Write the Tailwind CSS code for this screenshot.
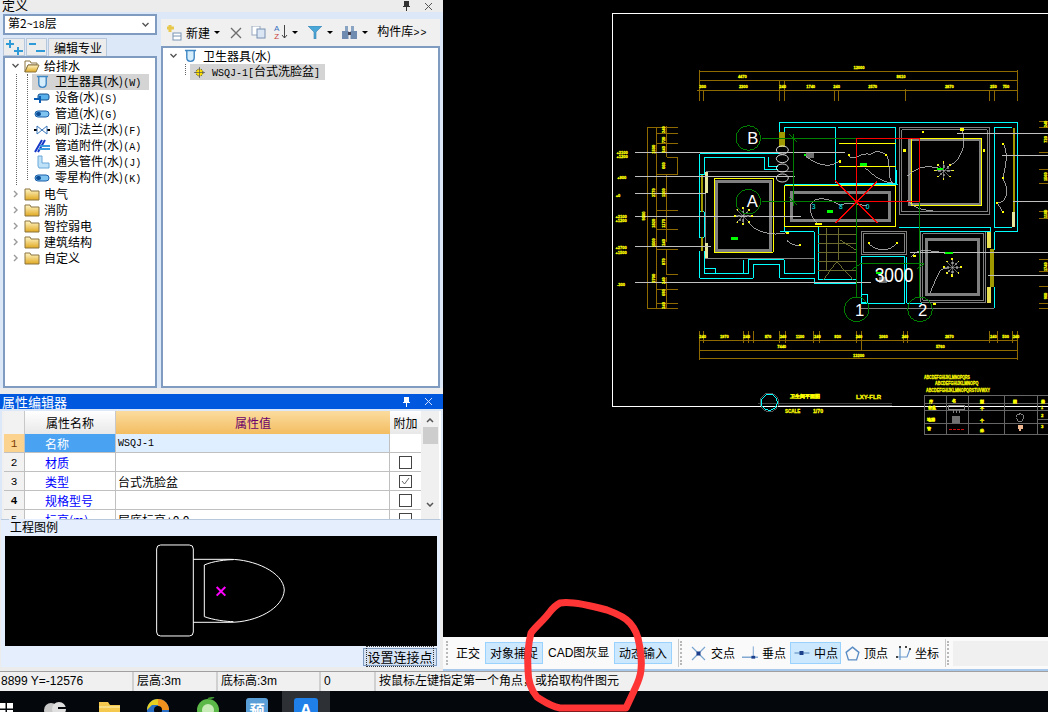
<!DOCTYPE html>
<html lang="zh">
<head>
  <meta charset="UTF-8" />
  <title>构件定义</title>
  <script src="https://cdn.jsdelivr.net/npm/@tailwindcss/browser@4"></script>
</head>
<body class="bg-black">

<!-- shared icons -->
<svg width="0" height="0" class="absolute">
  <defs>
    <linearGradient id="fold" x1="0" y1="0" x2="0" y2="1"><stop offset="0" stop-color="#fff6c8"/><stop offset="1" stop-color="#e0a820"/></linearGradient>
    <symbol id="folder" viewBox="0 0 16 14"><path d="M1 2h5l1 2h8v9H1z" fill="url(#fold)" stroke="#8a7440"/></symbol>
    <symbol id="folderopen" viewBox="0 0 16 14"><path d="M1 2h5l1 2h6v2H4L1 13z" fill="#fff" stroke="#8a7440"/><path d="M1 13l3-7h11l-3 7z" fill="url(#fold)" stroke="#8a7440"/></symbol>
    <symbol id="cup" viewBox="0 0 14 14"><path d="M1 1h12M3 1v8c0 5 8 5 8 0V1" fill="#d6eefb" stroke="#3f86c4" stroke-width="1.5"/></symbol>
    <symbol id="pipe" viewBox="0 0 16 10"><rect x="1" y="2" width="14" height="6" rx="3" fill="#7fc4f0" stroke="#1a5fa8"/><rect x="2" y="3" width="5" height="4" rx="2" fill="#0b4a94"/></symbol>
    <symbol id="chevd" viewBox="0 0 8 6"><path d="M1 1l3 3 3-3" fill="none" stroke="#555" stroke-width="1.4"/></symbol>
    <symbol id="chevr" viewBox="0 0 6 8"><path d="M1 1l3 3-3 3" fill="none" stroke="#999" stroke-width="1.4"/></symbol>
    <symbol id="flower" viewBox="-30 -30 60 60" overflow="visible">
      <g fill="#ffff00">
        <rect x="-4" y="-28" width="5" height="7"/><rect x="-4" y="21" width="5" height="7"/><rect x="-29" y="-3" width="7" height="5"/><rect x="22" y="-3" width="7" height="5"/>
        <rect x="-20" y="-20" width="5" height="5"/><rect x="15" y="-20" width="5" height="5"/><rect x="-20" y="15" width="5" height="5"/><rect x="15" y="15" width="5" height="5"/>
      </g>
      <g fill="#707070">
        <rect x="-4" y="-16" width="7" height="7"/><rect x="-4" y="10" width="7" height="7"/><rect x="-17" y="-3" width="7" height="7"/><rect x="10" y="-3" width="7" height="7"/>
        <rect x="8" y="-12" width="6" height="6"/><rect x="-13" y="8" width="6" height="6"/>
      </g>
      <path d="M-20-20L20 20M20-20L-20 20M0-26V26M-26 0H26" stroke="#c0c0c0" stroke-width="1.5"/>
    </symbol>
  </defs>
</svg>

<div class="w-[1048px] h-[712px] overflow-hidden flex flex-col bg-[#f0f0f0] text-[12px] leading-4 text-black font-['Noto_Sans_CJK_SC',sans-serif] relative">

  <div class="flex h-[671px]">
    <!-- left column -->
    <div class="w-[443px] flex flex-col shrink-0 bg-[#ececec]">

      <!-- 定义 panel title, cut by the top of the shot -->
      <div class="h-[12px] flex items-end justify-between pl-[2px] pr-[10px] overflow-hidden">
        <span class="text-[13px] leading-[13px] relative top-[-1px]">定义</span>
        <div class="flex items-center gap-[13px] h-[12px]">
          <svg width="9" height="10" viewBox="0 0 9 10"><path d="M2 0h5v5h1v1H5v4H4V6H1V5h1z" fill="#333"/></svg>
          <svg width="9" height="9" viewBox="0 0 9 9"><path d="M1 1l7 7M8 1L1 8" stroke="#555"/></svg>
        </div>
      </div>

      <!-- definition panes -->
      <div class="h-[376px] flex gap-[4px] pl-[3px] pr-[3px] bg-[#dce8f8]">
        <div class="w-[154px] flex flex-col shrink-0">
          <div class="mt-[2px] h-[21px] bg-white border-2 border-[#7f9cc0] flex items-center justify-between pl-[3px] pr-[5px]">
            <span>第2<span class="font-['Liberation_Mono'] text-[10px]">~18</span>层</span>
            <svg width="9" height="6"><use href="#chevd"/></svg>
          </div>
          <div class="mt-[3px] h-[18px] flex gap-[1px] items-end">
            <div class="w-[22px] h-[18px] bg-[#ececec] border border-[#b8c8dc] flex items-center justify-center">
              <svg width="17" height="15" viewBox="0 0 17 15"><path d="M4 0v8M0 4h8M12 7v8M8 11h9" stroke="#2f9ad8" stroke-width="2"/></svg>
            </div>
            <div class="w-[21px] h-[18px] bg-[#ececec] border border-[#b8c8dc] flex items-center justify-center">
              <svg width="17" height="13" viewBox="0 0 17 13"><path d="M1 3h7M8 10h9" stroke="#2f9ad8" stroke-width="2"/></svg>
            </div>
            <div class="w-[59px] h-[18px] bg-[#ececec] border border-[#b8c8dc] border-b-0 pl-[5px] leading-[18px]">编辑专业</div>
          </div>
          <div class="relative flex-1 bg-white border-2 border-[#7f9cc0]">
            <div class="absolute left-[11px] top-[16px] h-[111px] border-l border-dotted border-[#666]"></div>
            <div class="absolute left-[22px] top-[16px] h-[106px] border-l border-dotted border-[#666]"></div>
            <div class="h-4 flex items-center pl-[6px] gap-[4px]"><svg width="9" height="6"><use href="#chevd"/></svg><svg width="16" height="14"><use href="#folderopen"/></svg><span>给排水</span></div>
            <div class="h-4 flex items-center ml-[27px] mr-[6px] bg-[#d4d4d4] pl-[4px] gap-[6px] relative"><svg width="13" height="14"><use href="#cup"/></svg><span>卫生器具(水)<span class="font-['Liberation_Mono'] text-[10px]">(W)</span></span></div>
            <div class="h-4 flex items-center ml-[27px] pl-[2px] gap-[5px] relative"><svg width="16" height="12" viewBox="0 0 16 12"><rect x="4" y="2" width="11" height="6" rx="2" fill="#5ab0ea" stroke="#13508f"/><path d="M0 7h6M6 4v7" stroke="#0b5db3" stroke-width="2"/></svg><span>设备(水)<span class="font-['Liberation_Mono'] text-[10px]">(S)</span></span></div>
            <div class="h-4 flex items-center ml-[27px] pl-[2px] gap-[5px] relative"><svg width="16" height="10"><use href="#pipe"/></svg><span>管道(水)<span class="font-['Liberation_Mono'] text-[10px]">(G)</span></span></div>
            <div class="h-4 flex items-center ml-[27px] pl-[2px] gap-[5px] relative"><svg width="16" height="10" viewBox="0 0 16 10"><path d="M0 5h3M13 5h3" stroke="#000" stroke-width="2"/><path d="M3 1l10 8M13 1L3 9M3 1v8M13 1v8" fill="none" stroke="#3a76b8"/></svg><span>阀门法兰(水)<span class="font-['Liberation_Mono'] text-[10px]">(F)</span></span></div>
            <div class="h-4 flex items-center ml-[27px] pl-[2px] gap-[5px] relative"><svg width="16" height="14" viewBox="0 0 16 14"><path d="M1 13L8 1M4 13L11 1" stroke="#1638c8" stroke-width="2"/><path d="M6 7h10M5 10h11" stroke="#3a9ae0" stroke-width="2"/></svg><span>管道附件(水)<span class="font-['Liberation_Mono'] text-[10px]">(A)</span></span></div>
            <div class="h-4 flex items-center ml-[27px] pl-[2px] gap-[5px] relative"><svg width="16" height="14" viewBox="0 0 16 14"><path d="M4 1h4v7h7v5H5l-1-2z" fill="#bfe2f8" stroke="#6aa8d8"/></svg><span>通头管件(水)<span class="font-['Liberation_Mono'] text-[10px]">(J)</span></span></div>
            <div class="h-4 flex items-center ml-[27px] pl-[2px] gap-[5px] relative"><svg width="16" height="10"><use href="#pipe"/></svg><span>零星构件(水)<span class="font-['Liberation_Mono'] text-[10px]">(K)</span></span></div>
            <div class="h-4 flex items-center pl-[8px]"><svg width="6" height="8"><use href="#chevr"/></svg><svg class="ml-[5px]" width="16" height="14"><use href="#folder"/></svg><span class="ml-[4px]">电气</span></div>
            <div class="h-4 flex items-center pl-[8px]"><svg width="6" height="8"><use href="#chevr"/></svg><svg class="ml-[5px]" width="16" height="14"><use href="#folder"/></svg><span class="ml-[4px]">消防</span></div>
            <div class="h-4 flex items-center pl-[8px]"><svg width="6" height="8"><use href="#chevr"/></svg><svg class="ml-[5px]" width="16" height="14"><use href="#folder"/></svg><span class="ml-[4px]">智控弱电</span></div>
            <div class="h-4 flex items-center pl-[8px]"><svg width="6" height="8"><use href="#chevr"/></svg><svg class="ml-[5px]" width="16" height="14"><use href="#folder"/></svg><span class="ml-[4px]">建筑结构</span></div>
            <div class="h-4 flex items-center pl-[8px]"><svg width="6" height="8"><use href="#chevr"/></svg><svg class="ml-[5px]" width="16" height="14"><use href="#folder"/></svg><span class="ml-[4px]">自定义</span></div>
          </div>
        </div>

        <div class="w-[279px] flex flex-col shrink-0">
          <div class="mt-[7px] h-[27px] bg-[#f0f0f0] flex items-center pl-[5px]">
            <svg width="16" height="16" viewBox="0 0 16 16"><path d="M4 0v7M1 3h7" stroke="#e8c84a" stroke-width="3"/><rect x="7" y="8" width="8" height="7" fill="#fff" stroke="#7a94b4"/><path d="M7 11h8" stroke="#7a94b4"/></svg>
            <span class="ml-[4px]">新建</span>
            <svg class="ml-[4px]" width="6" height="3" viewBox="0 0 6 3"><path d="M0 0h6L3 3z"/></svg>
            <svg class="ml-[10px]" width="12" height="12" viewBox="0 0 12 12"><path d="M1 1l10 10M11 1L1 11" stroke="#6e6e6e" stroke-width="1.4"/></svg>
            <svg class="ml-[9px]" width="15" height="13" viewBox="0 0 15 13"><rect x="1" y="0" width="8" height="9" fill="#fff" stroke="#98a8c0"/><rect x="6" y="3" width="8" height="9" fill="#dbe6f5" stroke="#7890b0"/></svg>
            <div class="ml-[8px] flex items-center">
              <div class="flex flex-col items-center text-[8px] leading-[8px] font-['Liberation_Sans']"><span class="text-[#3a70c0]">A</span><span class="text-[#c84040]">Z</span></div>
              <svg class="ml-[2px]" width="7" height="15" viewBox="0 0 7 15"><path d="M3.5 0v13M1 10l2.500 3 2.500-3" fill="none" stroke="#444"/></svg>
              <svg class="ml-[4px]" width="6" height="3" viewBox="0 0 6 3"><path d="M0 0h6L3 3z"/></svg>
            </div>
            <svg class="ml-[10px]" width="14" height="13" viewBox="0 0 14 13"><path d="M0 0h14L8 6v7H6V6z" fill="#4aa8d8" stroke="#3a80b0" stroke-width=".6"/></svg>
            <svg class="ml-[5px]" width="6" height="3" viewBox="0 0 6 3"><path d="M0 0h6L3 3z"/></svg>
            <svg class="ml-[9px]" width="15" height="13" viewBox="0 0 15 13"><path d="M3 0h3v5H3zM9 0h3v5H9z" fill="#8aa4c4"/><rect x="0" y="5" width="6.500" height="8" fill="#6f8cb0"/><rect x="8.500" y="5" width="6.500" height="8" fill="#6f8cb0"/><path d="M6 6h3v3H6z" fill="#445"/></svg>
            <svg class="ml-[5px]" width="6" height="3" viewBox="0 0 6 3"><path d="M0 0h6L3 3z"/></svg>
            <span class="ml-[9px]">构件库<span class="font-['Liberation_Mono'] text-[10px] tracking-[1px]">&gt;&gt;</span></span>
          </div>
          <div class="flex-1 bg-white border-2 border-[#7f9cc0] relative">
            <div class="h-4 flex items-center pl-[6px]"><svg width="9" height="6"><use href="#chevd"/></svg><svg class="ml-[6px]" width="13" height="14"><use href="#cup"/></svg><span class="ml-[6px]">卫生器具(水)</span></div>
            <div class="h-4 flex items-center ml-[27px] w-[135px] bg-[#d4d4d4] pl-[4px] gap-[7px]">
              <svg width="11" height="11" viewBox="0 0 11 11"><circle cx="5.500" cy="5.500" r="3.500" fill="#ffe000" stroke="#444" stroke-dasharray="1.500 1"/><path d="M5.500 0v11M0 5.500h11" stroke="#555" stroke-width=".7"/></svg>
              <span><span class="font-['Liberation_Mono'] text-[10px]">WSQJ-1[</span>台式洗脸盆<span class="font-['Liberation_Mono'] text-[10px]">]</span></span>
            </div>
            <div class="absolute left-[22px] top-[16px] h-[11px] border-l border-dotted border-[#666]"></div>
          </div>
        </div>
      </div>

      <!-- property editor -->
      <div class="h-[6px] bg-[#ececec]"></div>
      <div class="h-[15px] bg-[#0058df] text-white flex items-center justify-between pl-[2px] pr-[10px]">
        <span class="text-[13px] leading-[14px]">属性编辑器</span>
        <div class="flex items-center gap-[13px]">
          <svg width="9" height="10" viewBox="0 0 9 10"><path d="M2 0h5v5h1v1H5v4H4V6H1V5h1z" fill="#fff"/></svg>
          <svg width="9" height="9" viewBox="0 0 9 9"><path d="M1 1l7 7M8 1L1 8" stroke="#cfe0ff"/></svg>
        </div>
      </div>
      <div class="h-[111px] bg-[#dce8f8] px-[2px] pt-[2px]">
        <div class="h-[108px] bg-white border-l-2 border-[#f0f0f0] flex overflow-hidden">
          <div class="w-[417px] overflow-hidden">
            <div class="grid grid-cols-[21px_91px_274px_31px] grid-rows-[23px_19px_19px_19px_19px_19px] h-[118px] leading-[20px]">
              <div class="bg-[#f2f2f2] border-r border-[#c8c8c8]"></div>
              <div class="bg-linear-to-b from-white to-[#e8e8e8] border-r border-[#c8c8c8] text-center leading-[23px]">属性名称</div>
              <div class="bg-linear-to-b from-[#fbdc9e] to-[#f3bd60] text-center text-[#6a006a] leading-[23px]">属性值</div>
              <div class="bg-linear-to-b from-white to-[#e8e8e8] text-center leading-[23px]">附加</div>

              <div class="bg-[#fcd38e] border-r border-b border-[#c0c0c0] text-center text-[11px] font-['Liberation_Mono'] text-[#7a3c00]">1</div>
              <div class="bg-[#4aa2f2] text-white border-r border-b border-[#c0c0c0] pl-[20px]">名称</div>
              <div class="bg-[#e0efff] border-r border-b border-[#c0c0c0] pl-[2px] text-[10px] font-['Liberation_Mono']">WSQJ-1</div>
              <div class="border-b border-[#c0c0c0]"></div>

              <div class="bg-[#f2f2f2] border-r border-b border-[#c0c0c0] text-center text-[11px] font-['Liberation_Mono']">2</div>
              <div class="border-r border-b border-[#c0c0c0] pl-[20px] text-[#0000ff]">材质</div>
              <div class="border-r border-b border-[#c0c0c0]"></div>
              <div class="border-b border-[#c0c0c0] flex items-center justify-center"><div class="w-[13px] h-[13px] border border-[#444]"></div></div>

              <div class="bg-[#f2f2f2] border-r border-b border-[#c0c0c0] text-center text-[11px] font-['Liberation_Mono']">3</div>
              <div class="border-r border-b border-[#c0c0c0] pl-[20px] text-[#0000ff]">类型</div>
              <div class="border-r border-b border-[#c0c0c0] pl-[2px]">台式洗脸盆</div>
              <div class="border-b border-[#c0c0c0] flex items-center justify-center"><div class="w-[13px] h-[13px] border border-[#444] flex items-center justify-center"><svg width="9" height="8" viewBox="0 0 9 8"><path d="M1 4l2.500 3L8 1" fill="none" stroke="#666"/></svg></div></div>

              <div class="bg-[#f2f2f2] border-r border-b border-[#c0c0c0] text-center text-[11px] font-['Liberation_Mono'] font-bold">4</div>
              <div class="border-r border-b border-[#c0c0c0] pl-[20px] text-[#0000ff]">规格型号</div>
              <div class="border-r border-b border-[#c0c0c0]"></div>
              <div class="border-b border-[#c0c0c0] flex items-center justify-center"><div class="w-[13px] h-[13px] border border-[#444]"></div></div>

              <div class="bg-[#f2f2f2] border-r border-[#c0c0c0] text-center text-[11px] font-['Liberation_Mono']">5</div>
              <div class="border-r border-[#c0c0c0] pl-[20px] text-[#0000ff]">标高(m)</div>
              <div class="border-r border-[#c0c0c0] pl-[2px]">层底标高+0.0</div>
              <div class="flex items-start justify-center pt-[3px]"><div class="w-[13px] h-[13px] border border-[#444]"></div></div>
            </div>
          </div>
          <div class="w-[18px] bg-[#f0f0f0] flex flex-col items-center pt-[7px]">
            <svg width="8" height="5" viewBox="0 0 8 5"><path d="M1 4l3-3 3 3" fill="none" stroke="#555" stroke-width="1.500"/></svg>
            <div class="mt-[4px] w-[15px] h-[17px] bg-[#cdcdcd]"></div>
            <svg class="mt-[58px]" width="8" height="5" viewBox="0 0 8 5"><path d="M1 1l3 3 3-3" fill="none" stroke="#555" stroke-width="1.500"/></svg>
          </div>
        </div>
      </div>

      <!-- 工程图例 -->
      <div class="relative h-[148px] bg-[#e4eefc] border-t border-[#b8c8dc] ml-[1px] mr-[3px] mt-[-1px] pt-[16px] px-[4px]">
        <span class="absolute left-[8px] top-[-1px] px-[1px] bg-[#e4eefc] leading-[16px]">工程图例</span>
        <svg class="block bg-black" width="432" height="110" viewBox="5 536 432 110">
          <g transform="translate(0 385) scale(.3333)" fill="none" stroke="#fff" stroke-width="3" >
            <rect x="470" y="480" width="110" height="273" rx="12"/>
            <path d="M580 523H690C760 523 850 560 853 615 850 670 770 712 690 712H580"/>
            <path d="M700 524C680 524 640 528 613 540V695C640 705 680 710 700 710"/>
            <path d="M650 606L676 632M676 606L650 632" stroke="#ff00ff" stroke-width="6"/>
          </g>
        </svg>
        <div class="h-[21px] flex justify-end items-start pt-[2px] -mr-[1px]">
          <div class="w-[74px] h-[18px] bg-[#d4e2f4] border border-[#7f9cc0] text-[13px] leading-[16px] text-center whitespace-nowrap"><span class="border border-dotted border-[#333]">设置连接点</span></div>
        </div>
      </div>
    </div>

    <!-- CAD canvas and bottom toolbar -->
    <div class="flex-1 flex flex-col min-w-0">
      <div class="h-[637px] bg-black">
        <svg class="block" width="605" height="637" viewBox="443 0 605 637" font-family="Liberation Sans" shape-rendering="crispEdges">
          <!-- drawing frame -->
          <path d="M1048 13.500H612.500V406H1048" fill="none" stroke="#fff"/>

          <g transform="translate(640 60) scale(.33333)" fill="none" stroke-width="3">
            <!-- dimension lines -->
            <path stroke="#8f6a00" d="M178 35H1132M178 62H1132M172 92H1132M178 30V122M192 90V122M420 62V122M433 62V122M585 90V122M595 90V122M798 88V122M1050 90V122M1063 90V122M1132 30V122
              M22 203H50V745H22ZM50 203H114M80 197V290M80 292H114V345M80 345V545M50 220H114M50 250H114M50 278H114M50 343H114M50 401H80M50 453H114M50 508H114M50 559H114M50 570H114M80 570V645H114M50 667H114M50 690H114M50 730H114M50 745H114M80 650V745
              M178 842H1132M178 872H1132M178 895H1132M178 812V900M192 812V850M310 812V850M327 812V850M340 812V850M420 812V850M437 812V850M522 812V850M540 812V850M650 812V850M664 812V872M790 812V850M803 812V850M1050 812V850M1072 812V850M1118 812V850M1132 812V900
              M1197 203H1224M1197 185H1224M1197 278H1224M1197 330H1224M1197 370H1224M1197 455H1224M1197 475H1224M1197 600H1224M1197 635H1224M1197 680H1224M1197 730H1224M1197 745H1224"/>

            <!-- walls: light grey -->
            <path stroke="#808080" d="M197 335H463M197 335V597H523M778 203H1050V463H778ZM785 210H1042V455H785ZM842 515H1038V727H842ZM848 521H1032V721H848ZM664 515H800V585H664ZM670 521H794V579H670ZM664 745H1063"/>
            <g stroke="#808080" stroke-width="9">
              <rect x="231" y="364" width="161" height="207"/>
              <rect x="455" y="398" width="293" height="84"/>
              <rect x="808" y="240" width="214" height="195"/>
              <rect x="860" y="540" width="155" height="165"/>
            </g>
            <rect x="499" y="277" width="22" height="16" fill="#707070"/>
            <rect x="717" y="652" width="24" height="16" fill="#707070"/>

            <!-- cyan walls -->
            <path stroke="#00ffff" d="M418 187H1132V515H1064V570M418 187V262M433 203H587V370M595 203H768V370M595 370H768M433 203V262M778 503H1052V515H840M1063 203H1116M1063 203V503H1116
              M180 282H418M180 282V345M193 292H375V330H415M385 292V320H415M178 345H193M178 455H193V532H178M180 345V532M193 292V345M180 572V655H340V613H420V655H523V672H650M193 572V642H325V600H433V642H523V515M535 500V660H648M435 375V515H523M435 375H775M770 330V375M664 590V730H795V590M800 590V730H845M664 590H795M1064 680V745M420 515H435
              M193 625H228V642H193ZM310 642V600M665 703H682V728H665Z"/>

            <!-- yellow trims -->
            <path stroke="#ffff00" d="M223 355H400V577H223ZM435 378H767V500H435ZM814 235H1025V438H814ZM596 250H768M596 320H768"/>

            <!-- stairs -->
            <path stroke="#6b6b30" d="M535 525H648M535 550H648M535 577H648M535 605H648M535 632H648M560 503V632M595 503V600M550 660L590 605 640 660M600 540L648 570"/>

            <!-- windows -->
            <g stroke="none">
              <rect x="183" y="345" width="7" height="110" fill="#a09a00"/>
              <rect x="183" y="532" width="7" height="40" fill="#a09a00"/>
              <rect x="1050" y="568" width="13" height="112" fill="#a09a00"/>
              <rect x="1118" y="205" width="8" height="250" fill="#a09a00"/>
              <rect x="195" y="335" width="8" height="65" fill="#e8e8a0"/>
              <rect x="195" y="550" width="8" height="45" fill="#e8e8a0"/>
              <rect x="1116" y="455" width="9" height="45" fill="#e8e8a0"/>
              <rect x="1041" y="515" width="11" height="50" fill="#e8e050"/>
              <rect x="1041" y="680" width="11" height="50" fill="#e8e050"/>
              <rect x="418" y="215" width="16" height="47" fill="#a09a00"/>
            </g>

            <!-- wiring -->
            <path stroke="#b8b8b8" stroke-width="2.500" d="M495 285C530 320 580 325 600 300M625 285C640 310 670 270 690 285 710 265 730 280 740 285 755 320 740 360 760 370 720 365 690 340 665 312M325 485C340 515 400 530 440 518M440 540C450 555 470 555 480 558M510 440C520 400 580 420 600 436 640 420 660 440 680 435M510 440C510 470 530 490 535 490M800 350C830 320 860 315 900 325M965 210C985 250 960 310 920 320M800 420C830 450 850 450 880 452M685 550C710 575 750 575 770 550M870 700C895 640 900 620 925 625M815 590C835 560 880 575 920 580M1090 250C1110 290 1090 340 1088 355 1110 390 1100 430 1070 428 1085 445 1085 455 1090 455"/>
            <g stroke="#fff" stroke-width="2.500" shape-rendering="auto">
              <ellipse cx="427" cy="270" rx="18" ry="12"/><ellipse cx="427" cy="296" rx="18" ry="12"/><ellipse cx="427" cy="324" rx="18" ry="12"/><ellipse cx="427" cy="354" rx="18" ry="12"/>
            </g>

            <!-- leader lines -->
            <path stroke="#c0c0c0" d="M-15 278H615M-15 349H465M-15 401H197M-15 469H483M-15 559H213M-15 667H692M950 220H1224M1086 287H1224M1118 425H1224M810 577H1224M1045 647H1224"/>

            <!-- fixtures -->
            <use href="#flower" x="280" y="438" width="60" height="60"/>
            <use href="#flower" x="882" y="302" width="60" height="60"/>
            <use href="#flower" x="908" y="592" width="60" height="60"/>

            <!-- axes -->
            <path stroke="#008000" d="M365 236H650M365 425H838M650 236V710M838 236V710M460 222V437M447 222L472 247M447 412L472 437M637 628L660 612H852L830 628"/>
            <g stroke="#008000">
              <circle cx="325" cy="234" r="37"/><circle cx="325" cy="425" r="37"/><circle cx="650" cy="748" r="37"/><circle cx="840" cy="748" r="37"/>
            </g>

            <!-- red selection -->
            <path stroke="#ff0000" d="M650 236H838V425H650ZM586 362L713 489M586 489L711 365" stroke-width="4"/>

            <!-- small markers -->
            <g stroke="none" fill="#00ff00">
              <rect x="660" y="310" width="20" height="8"/><rect x="562" y="451" width="17" height="8"/><rect x="272" y="531" width="22" height="8"/><rect x="708" y="636" width="20" height="7"/><rect x="915" y="577" width="24" height="5"/><rect x="890" y="325" width="20" height="6"/><rect x="492" y="282" width="7" height="7"/>
            </g>
            <g stroke="none" fill="#ffff00">
              <rect x="847" y="212" width="6" height="8"/><rect x="960" y="205" width="12" height="8"/><rect x="790" y="268" width="8" height="8"/><rect x="1030" y="268" width="6" height="8"/><rect x="625" y="282" width="6" height="6"/><rect x="735" y="282" width="6" height="6"/><rect x="596" y="300" width="6" height="8"/><rect x="525" y="490" width="20" height="6"/><rect x="438" y="515" width="8" height="8"/><rect x="476" y="553" width="6" height="6"/><rect x="685" y="546" width="6" height="6"/><rect x="768" y="546" width="6" height="6"/><rect x="1086" y="248" width="6" height="6"/><rect x="1086" y="350" width="6" height="6"/><rect x="1068" y="425" width="6" height="6"/><rect x="1085" y="452" width="6" height="6"/><rect x="880" y="730" width="8" height="6"/><rect x="820" y="586" width="8" height="6"/>
            </g>

            <!-- dimension labels -->
            <g stroke="#ffff00" stroke-width=".8" fill="#ffff00" font-size="12" font-weight="700" text-anchor="middle">
              <text x="657" y="26">12000</text><text x="307" y="54">4470</text><text x="783" y="54">8610</text>
              <text x="188" y="84">300</text><text x="310" y="84">2300</text><text x="428" y="84">240</text><text x="512" y="84">1740</text><text x="590" y="84">240</text><text x="698" y="84">2570</text><text x="928" y="84">2870</text><text x="1060" y="84">250</text><text x="1098" y="84">750</text>
              <text x="188" y="835">240</text><text x="253" y="835">1970</text><text x="320" y="835">240</text><text x="384" y="835">870</text><text x="429" y="835">240</text><text x="480" y="835">1100</text><text x="532" y="835">240</text><text x="593" y="835">930</text><text x="657" y="835">240</text><text x="730" y="835">1060</text><text x="795" y="835">240</text><text x="928" y="835">2870</text><text x="1060" y="835">240</text><text x="1097" y="835">500</text><text x="1128" y="835">240</text>
              <text x="425" y="863">7440</text><text x="901" y="863">5760</text><text x="656" y="892">13200</text>
              <text transform="translate(74 209) rotate(-90)">240</text><text transform="translate(74 240) rotate(-90)">720</text><text transform="translate(74 268) rotate(-90)">240</text><text transform="translate(74 317) rotate(-90)">660</text><text transform="translate(74 398) rotate(-90)">1100</text><text transform="translate(74 490) rotate(-90)">1170</text><text transform="translate(74 547) rotate(-90)">240</text><text transform="translate(74 605) rotate(-90)">870</text><text transform="translate(74 662) rotate(-90)">240</text><text transform="translate(74 698) rotate(-90)">690</text><text transform="translate(74 736) rotate(-90)">240</text>
              <text transform="translate(45 268) rotate(-90)">1500</text><text transform="translate(45 398) rotate(-90)">2770</text><text transform="translate(45 490) rotate(-90)">1820</text><text transform="translate(45 548) rotate(-90)">1500</text><text transform="translate(45 655) rotate(-90)">2700</text>
              <text transform="translate(16 468) rotate(-90)">9000</text>
              <text transform="translate(1222 192) rotate(-90)">240</text><text transform="translate(1222 238) rotate(-90)">720</text><text transform="translate(1222 350) rotate(-90)">1560</text><text transform="translate(1222 462) rotate(-90)">1100</text><text transform="translate(1222 620) rotate(-90)">1740</text><text transform="translate(1222 708) rotate(-90)">900</text>
              <text x="-54" y="282">+2100</text><text x="-54" y="295">+1200</text><text x="-55" y="358">+900</text><text x="-66" y="412">+0</text><text x="-57" y="474">+2100</text><text x="-57" y="487">+1200</text><text x="-57" y="568">+2700</text><text x="-57" y="583">+1500</text><text x="-57" y="679">-300</text>
            </g>
            <g stroke="none" fill="#00ffff" font-size="20"><text x="515" y="447">3</text><text x="597" y="447">8</text><text x="677" y="447">0</text></g>
            <g fill="#fff" stroke="none" font-size="50" shape-rendering="auto">
              <text x="322" y="253">B</text><text x="320" y="442">A</text><text x="645" y="767">1</text><text x="834" y="767">2</text>
              <text x="704" y="665" textLength="116" lengthAdjust="spacingAndGlyphs" font-size="58">3000</text>
            </g>
          </g>

          <!-- title and detail block under the plan -->
          <g transform="translate(740 340) scale(.33333)" fill="none" stroke-width="3">
            <path stroke="#404040" d="M55 190H455M118 196H455"/>
            <circle cx="88" cy="187" r="28" stroke="#555"/>
            <circle cx="88" cy="187" r="24" stroke="#00ffff"/>
            <path stroke="#666" d="M553 168H924M553 190H924M553 213H924M553 252H924M553 284H924M553 168V284M619 168V284M685 168V284M793 168V284M892 168V284M892 238H924"/>
            <rect x="625" y="196" width="48" height="12" stroke="#808080"/>
            <path stroke="#808080" d="M640 208V220M650 208V220M660 208V220"/>
            <rect x="636" y="228" width="24" height="20" fill="#707070"/>
            <circle cx="840" cy="233" r="11" stroke="#808080" stroke-width="4" stroke-dasharray="4 2"/>
            <rect x="834" y="256" width="15" height="12" fill="#f0b890"/><rect x="838" y="268" width="6" height="6" fill="#f0b890"/>
            <path stroke="#d01010" stroke-dasharray="8 4" d="M627 268H672"/>
            <g stroke="#ffff00" stroke-width=".8" fill="#ffff00" font-size="14" font-weight="700">
              <text x="552" y="116" textLength="138" lengthAdjust="spacingAndGlyphs">ABCDEFGHIJKLMNOPQRS</text>
              <text x="585" y="135" textLength="130" lengthAdjust="spacingAndGlyphs">ABCDEFGHIJKLMNOPQ</text>
              <text x="558" y="155" textLength="192" lengthAdjust="spacingAndGlyphs">ABCDEFGHIJKLMNOPQRSTUVWXY</text>
              <text x="150" y="174" textLength="90" lengthAdjust="spacingAndGlyphs" font-size="16">卫生间平面图</text>
              <text x="348" y="178" textLength="75" lengthAdjust="spacingAndGlyphs">LXY-FLR</text>
              <text x="135" y="218" textLength="46" lengthAdjust="spacingAndGlyphs">SCALE</text><text x="219" y="218" textLength="30" lengthAdjust="spacingAndGlyphs">1/70</text>
              <text x="567" y="189" font-size="13">序</text><text x="637" y="186" font-size="13">名</text><text x="720" y="189" font-size="13">型</text><text x="819" y="189" font-size="13">图</text><text x="903" y="189" font-size="13">量</text>
              <text x="563" y="208" font-size="13">台盆</text><text x="720" y="210" font-size="13">个</text><text x="902" y="208" font-size="13">1</text><text x="903" y="231" font-size="13">2</text>
              <text x="561" y="243" font-size="13">地漏</text><text x="720" y="245" font-size="13">个</text><text x="903" y="263" font-size="13">3</text>
              <text x="561" y="270" font-size="13">管</text><text x="720" y="275" font-size="13">米</text>
            </g>
          </g>
        </svg>
      </div>

      <!-- snap toolbar -->
      <div class="h-[32px] bg-[#fafafa] flex items-center pl-[3px] whitespace-nowrap [&>*]:shrink-0">
        <div class="w-[2px] h-[24px] border-l-2 border-dotted border-[#b8b8b8]"></div>
        <span class="ml-[8px] w-[24px]">正交</span>
        <div class="ml-[5px] w-[58px] h-[22px] bg-[#cce8ff] border border-[#99d1ff] text-center leading-[20px]">对象捕捉</div>
        <span class="ml-[5px] w-[61px] font-['Liberation_Sans','Noto_Sans_CJK_SC',sans-serif]">CAD图灰显</span>
        <div class="ml-[5px] w-[58px] h-[22px] bg-[#cce8ff] border border-[#99d1ff] text-center leading-[20px]">动态输入</div>
        <div class="ml-[6px] w-[1px] h-[28px] bg-[#c8c8c8]"></div>
        <div class="ml-[1px] w-[2px] h-[24px] border-l-2 border-dotted border-[#b8b8b8]"></div>
        <svg class="ml-[9px]" width="15" height="15" viewBox="0 0 15 15"><path d="M1 1l13 13M14 1L1 14" stroke="#7aa4d0" stroke-width="1.200"/><rect x="5.500" y="5.500" width="4" height="4" fill="#1c3f8c"/></svg>
        <span class="ml-[5px] w-[24px]">交点</span>
        <svg class="ml-[7px]" width="16" height="14" viewBox="0 0 17 14"><path d="M0 11.500h17" stroke="#7aa4d0" stroke-width="1.500"/><path d="M12 0v11" stroke="#7aa4d0"/><rect x="10" y="10" width="4" height="3" fill="#1c3f8c"/></svg>
        <span class="ml-[4px] w-[24px]">垂点</span>
        <div class="ml-[4px] w-[51px] h-[22px] bg-[#cce8ff] border border-[#99d1ff] flex items-center pl-[3px]">
          <svg width="16" height="6" viewBox="0 0 15 6"><path d="M0 3h15" stroke="#7aa4d0" stroke-width="1.500"/><rect x="5" y="1" width="4" height="4" fill="#1c3f8c"/></svg>
          <span class="ml-[4px]">中点</span>
        </div>
        <svg class="ml-[4px]" width="15" height="15" viewBox="0 0 13 13"><path d="M6.500 1L12 5.500 10 12H3L1 5.500z" fill="none" stroke="#5a8cc4" stroke-width="1.200"/></svg>
        <span class="ml-[4px] w-[24px]">顶点</span>
        <svg class="ml-[8px]" width="15" height="15" viewBox="0 0 15 15"><path d="M4 1v13M1 11h10L14 3" fill="none" stroke="#6a98cc" stroke-width="1.200"/><g fill="#444"><rect x="3" y="0" width="2" height="2"/><rect x="0" y="10" width="2" height="2"/><rect x="9" y="0" width="2" height="2"/><rect x="13" y="2" width="2" height="2"/></g></svg>
        <span class="ml-[4px] w-[24px]">坐标</span>
        <div class="ml-[6px] w-[1px] h-[28px] bg-[#c8c8c8]"></div>
        <div class="ml-[1px] w-[2px] h-[24px] border-l-2 border-dotted border-[#b8b8b8]"></div>
        <div class="ml-[4px] w-[95px] h-[25px] bg-[#f0f0f0]"></div>
      </div>
      <div class="h-[2px] bg-[#a8c8ec]"></div>
    </div>
  </div>

  <!-- status bar -->
  <div class="h-[20px] flex bg-[#f0f0f0] border-t border-[#a0a0a0] leading-[19px] font-['Liberation_Sans','Noto_Sans_CJK_SC',sans-serif] whitespace-nowrap">
    <div class="w-[132px] pl-[1px] overflow-hidden">8899 Y=-12576</div>
    <div class="w-[84px] pl-[3px] border-l-2 border-[#d0d0d0]">层高:3m</div>
    <div class="w-[103px] pl-[3px] border-l-2 border-[#d0d0d0]">底标高:3m</div>
    <div class="w-[55px] pl-[3px] border-l-2 border-[#d0d0d0]">0</div>
    <div class="flex-1 pl-[3px] border-l-2 border-[#d0d0d0]">按鼠标左键指定第一个角点，或拾取构件图元</div>
  </div>

  <!-- taskbar, cut off at the bottom -->
  <div class="h-[21px] bg-[#04070b] flex items-start overflow-hidden [&>*]:shrink-0">
    <svg class="mt-[12px]" width="13" height="13" viewBox="0 0 13 13"><path d="M0 0h5.500v5.500H0zM7 0h6v5.500H7zM0 7h5.500v6H0zM7 7h6v6H7z" fill="#fff"/></svg>
    <svg class="ml-[31px] mt-[9px]" width="22" height="18" viewBox="0 0 22 18"><circle cx="7" cy="10" r="7" fill="#c8c8c8"/><circle cx="15" cy="9" r="7" fill="#e0e0e0"/><path d="M14 8h8" stroke="#04070b" stroke-width="2"/></svg>
    <svg class="ml-[32px] mt-[11px]" width="23" height="15" viewBox="0 0 23 15"><path d="M1 0h9l2 3h10v12H1z" fill="#f4c94e"/><path d="M1 5h21" stroke="#fff3b8"/></svg>
    <svg class="ml-[26px] mt-[8px]" width="22" height="22" viewBox="0 0 22 22"><circle cx="11" cy="11" r="11" fill="#2a6fc4"/><path d="M11 0a11 11 0 0 1 11 11H11z" fill="#f2921e"/><path d="M0 11a11 11 0 0 1 11-11v6H5z" fill="#e8d020"/><circle cx="11" cy="11" r="4" fill="#04070b"/></svg>
    <svg class="ml-[28px] mt-[6px]" width="22" height="24" viewBox="0 0 22 24"><circle cx="11" cy="13" r="11" fill="#5cb848"/><circle cx="11" cy="13" r="6" fill="#c8ecb8"/><path d="M11 2l6-2" stroke="#3c9030" stroke-width="2"/></svg>
    <div class="ml-[27px] mt-[7px] w-[22px] h-[24px] rounded-[3px] bg-[#5a9ed8] text-white text-[15px] leading-[24px] text-center font-bold">预</div>
    <div class="ml-[14px] w-[48px] h-[21px] bg-[#2d3035] flex justify-center">
      <div class="mt-[7px] w-[24px] h-[24px] rounded-[3px] bg-[#1e80e8] text-white text-[17px] leading-[25px] text-center font-bold font-['Liberation_Sans']">A</div>
    </div>
  </div>

  <!-- red marker ring added over the shot -->
  <svg class="absolute left-0 top-0 pointer-events-none" width="1048" height="712" viewBox="0 0 1048 712">
    <path d="M560 603C570 601 585 604 607 610 618 614 626 618 630 623 636 630 638 636 639 643 641 652 642 660 641 670 640 680 636 686 633 693L626 708H560C550 706 545 702 537 697 531 690 528 680 528 670 527 655 528 645 531 633 536 626 544 620 549 613 552 609 556 605 560 603Z" fill="none" stroke="#ff3535" stroke-width="7" stroke-linejoin="round"/>
  </svg>
</div>

</body>
</html>
